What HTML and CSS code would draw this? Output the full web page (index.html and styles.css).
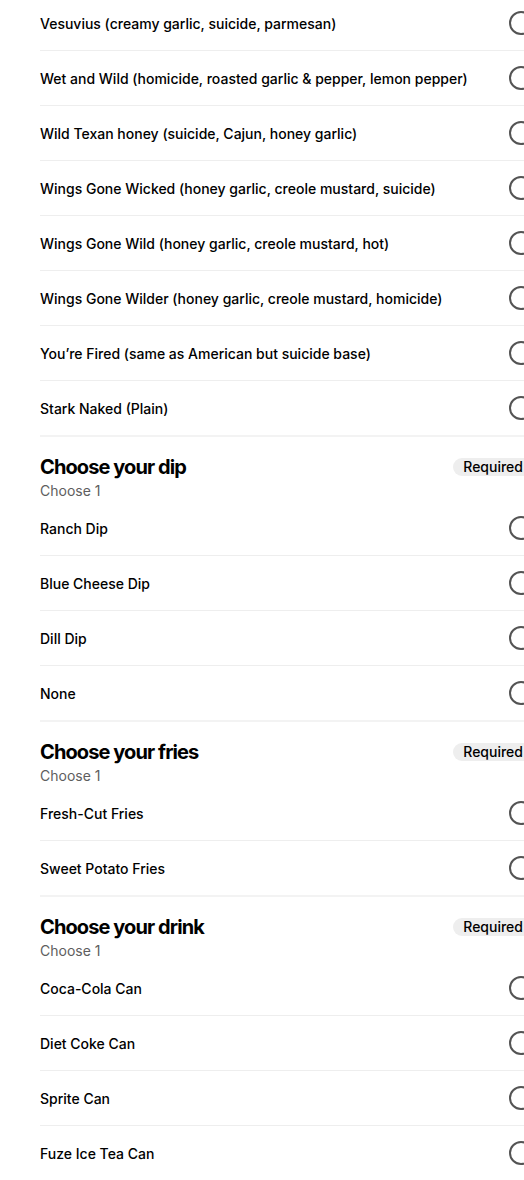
FILE: index.html
```html
<!DOCTYPE html>
<html lang="en">
<head>
  <meta charset="UTF-8">
  <meta name="viewport" content="width=device-width, initial-scale=1.0">
  <title>Item options</title>
  <link rel="stylesheet" href="styles.css">
</head>
<body>

<div class="options">
  <!-- Flavour list (scrolled) -->
  <div class="group">
    <label class="option"><span>Vesuvius (creamy garlic, suicide, parmesan)</span><span class="radio"></span></label>
    <label class="option"><span>Wet and Wild (homicide, roasted garlic &amp; pepper, lemon pepper)</span><span class="radio"></span></label>
    <label class="option"><span>Wild Texan honey (suicide, Cajun, honey garlic)</span><span class="radio"></span></label>
    <label class="option"><span>Wings Gone Wicked (honey garlic, creole mustard, suicide)</span><span class="radio"></span></label>
    <label class="option"><span>Wings Gone Wild (honey garlic, creole mustard, hot)</span><span class="radio"></span></label>
    <label class="option"><span>Wings Gone Wilder (honey garlic, creole mustard, homicide)</span><span class="radio"></span></label>
    <label class="option"><span>You’re Fired (same as American but suicide base)</span><span class="radio"></span></label>
    <label class="option"><span>Stark Naked (Plain)</span><span class="radio"></span></label>
  </div>

  <div class="group">
    <div class="group-head">
      <div>
        <h3>Choose your dip</h3>
        <div class="hint">Choose 1</div>
      </div>
      <span class="badge">Required</span>
    </div>
    <label class="option"><span>Ranch Dip</span><span class="radio"></span></label>
    <label class="option"><span>Blue Cheese Dip</span><span class="radio"></span></label>
    <label class="option"><span>Dill Dip</span><span class="radio"></span></label>
    <label class="option"><span>None</span><span class="radio"></span></label>
  </div>

  <div class="group">
    <div class="group-head">
      <div>
        <h3>Choose your fries</h3>
        <div class="hint">Choose 1</div>
      </div>
      <span class="badge">Required</span>
    </div>
    <label class="option"><span>Fresh-Cut Fries</span><span class="radio"></span></label>
    <label class="option"><span>Sweet Potato Fries</span><span class="radio"></span></label>
  </div>

  <div class="group">
    <div class="group-head">
      <div>
        <h3>Choose your drink</h3>
        <div class="hint">Choose 1</div>
      </div>
      <span class="badge">Required</span>
    </div>
    <label class="option"><span>Coca-Cola Can</span><span class="radio"></span></label>
    <label class="option"><span>Diet Coke Can</span><span class="radio"></span></label>
    <label class="option"><span>Sprite Can</span><span class="radio"></span></label>
    <label class="option"><span>Fuze Ice Tea Can</span><span class="radio"></span></label>
  </div>
</div>

</body>
</html>
```

FILE: styles.css
```css
html, body {
  overflow-x: hidden;
}
body {
  font-family: Inter, "Noto Sans", sans-serif;
  margin: 0;
  background-color: white;
  color: #000;
}
.options {
  width: 493px;
  margin-top: -4px;
  padding-left: 40px;
}
.group {
  border-bottom: 2px solid #f3f3f3;
}
.group-head {
  display: flex;
  justify-content: space-between;
  align-items: flex-start;
  padding-top: 16px;
}
h3 {
  margin: 0;
  font-size: 20px;
  line-height: 28px;
  font-weight: 700;
  letter-spacing: -0.9px;
}
.hint {
  font-size: 14px;
  line-height: 20px;
  color: #5e5e5e;
}
.badge {
  margin-top: 5px;
  padding: 0 10px;
  font-size: 14px;
  line-height: 18px;
  font-weight: 500;
  background-color: #eeeeee;
  border-radius: 10px;
}
.option {
  display: flex;
  justify-content: space-between;
  align-items: center;
  height: 54px;
  font-size: 14px;
  font-weight: 500;
  border-bottom: 1px solid #eeeeee;
}
.option:last-child {
  border-bottom: none;
}
.radio {
  width: 20px;
  height: 20px;
  border: 2px solid #545454;
  border-radius: 50%;
  flex-shrink: 0;
}
```
